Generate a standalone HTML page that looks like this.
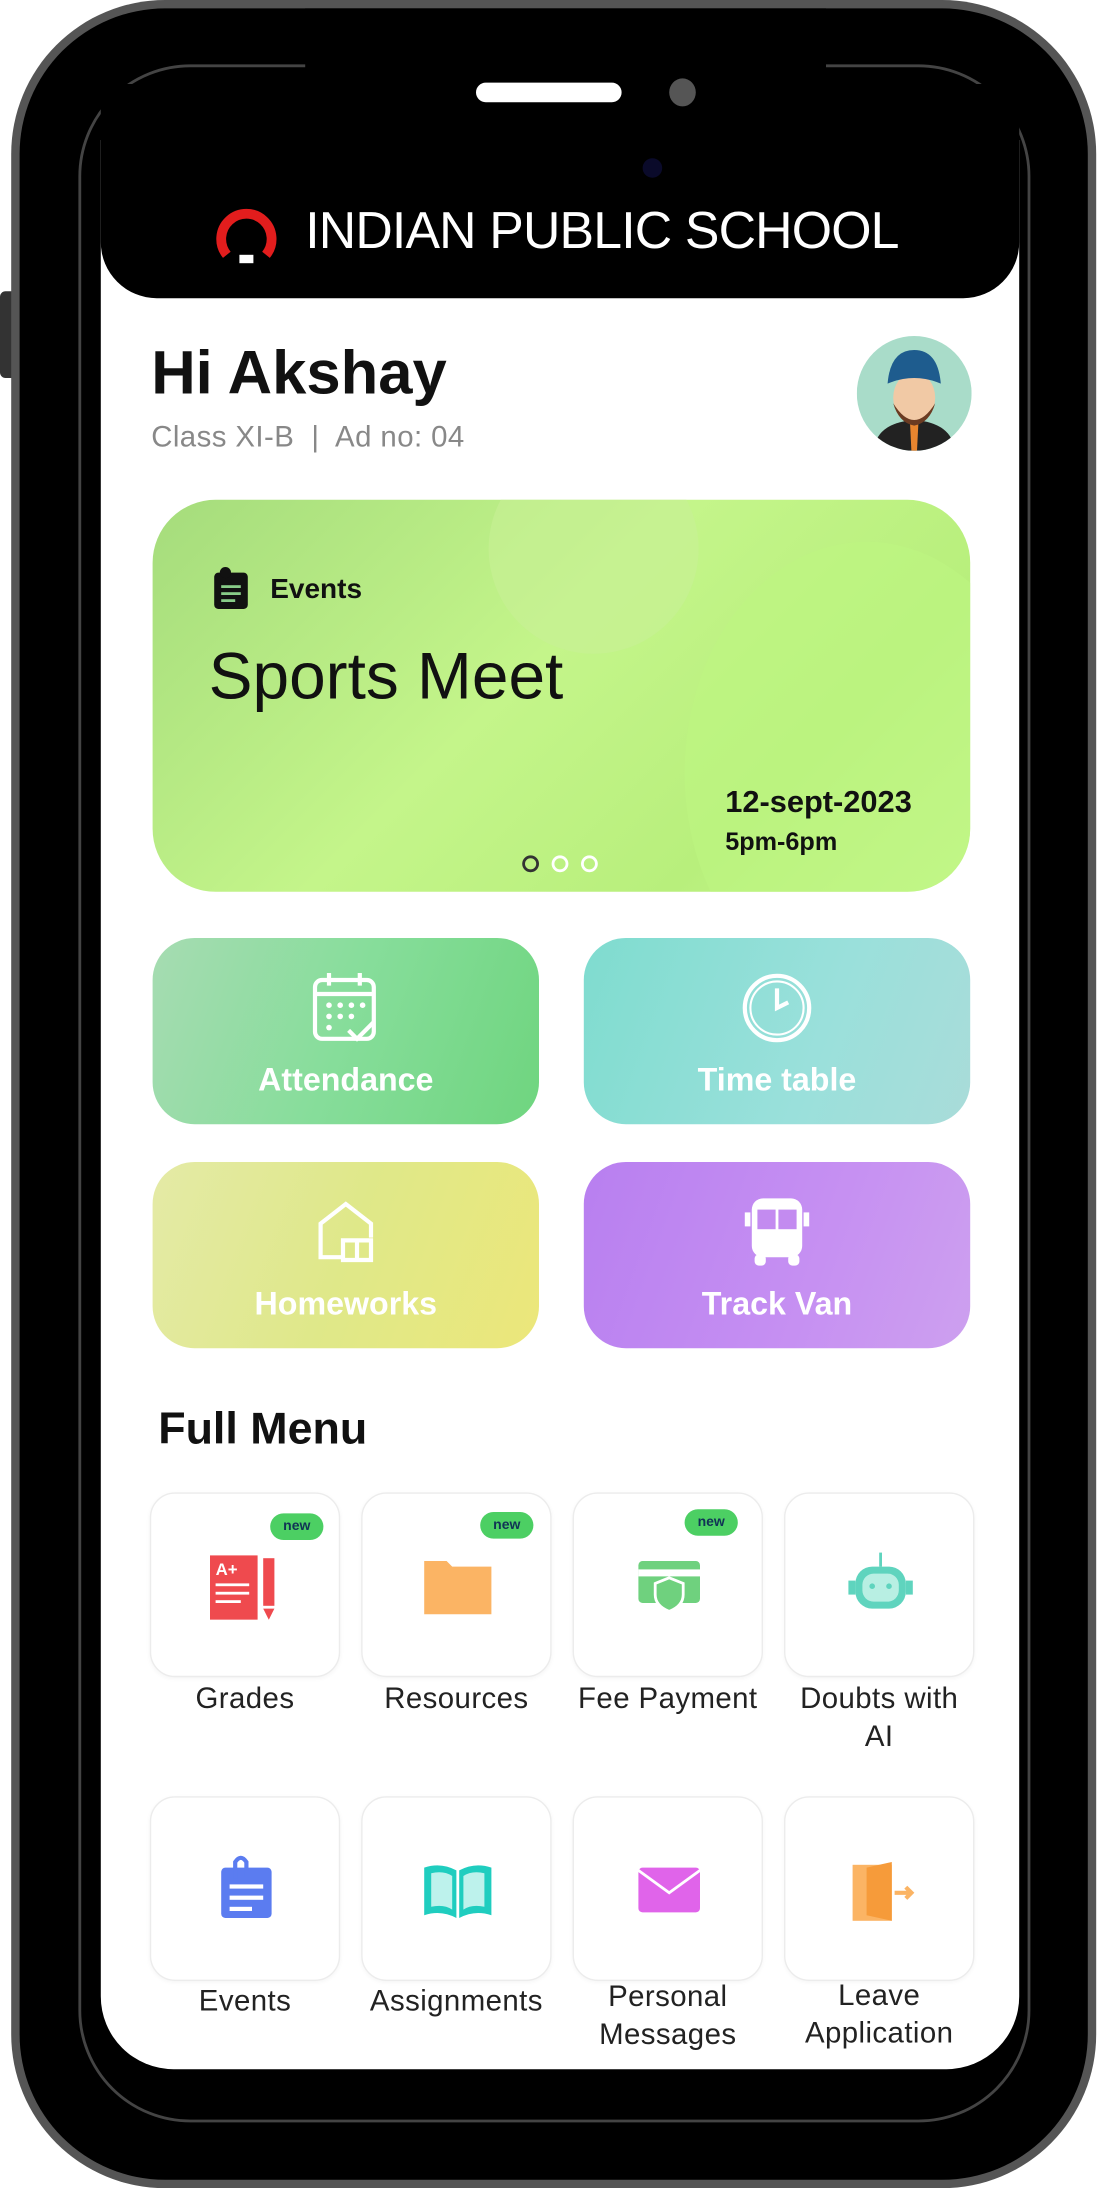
<!DOCTYPE html>
<html><head><meta charset="utf-8"><style>
html,body{margin:0;padding:0;background:#fff;width:1106px;height:2188px;overflow:hidden}
#w{position:absolute;left:0;top:0;width:790px;height:1563px;transform:scale(1.4);transform-origin:0 0;font-family:"Liberation Sans",sans-serif}
.a{position:absolute}
.tile{position:absolute;width:276px;height:133px;border-radius:30px;color:#fff;font-weight:bold;font-size:23px;text-align:center}
.tile span{position:absolute;left:0;right:0;top:88px}
.tile svg{position:absolute;left:112px;top:22px}
.card{position:absolute;width:134px;height:130px;border:1px solid #ececec;border-radius:18px;background:#fff;box-shadow:0 1px 3px rgba(0,0,0,.04)}
.lb{position:absolute;width:170px;text-align:center;font-size:21px;color:#222;line-height:27px;letter-spacing:0.3px}
.new{position:absolute;width:38px;height:19px;border-radius:10px;background:#4ccf63;color:#135;font-size:10px;text-align:center;line-height:19px;font-weight:bold}
.card svg{position:absolute;left:42px;top:40px}
</style></head><body><div id="w">
<div class="a" style="left:0;top:208px;width:12px;height:62px;background:#333;border-radius:4px"></div>
<div class="a" style="left:8px;top:0;width:775px;height:1563px;background:#555;border-radius:110px"></div>
<div class="a" style="left:14px;top:6px;width:763px;height:1551px;background:#000;border-radius:104px"></div>
<div class="a" style="left:56px;top:46px;width:680px;height:1470px;border-radius:80px;border:2px solid #444;box-sizing:border-box"></div>
<div class="a" style="left:72px;top:100px;width:656px;height:1378px;background:#fff;border-radius:0 0 52px 52px"></div>
<div class="a" style="left:72px;top:60px;width:656px;height:153px;background:#000;border-radius:0 0 40px 40px"></div>
<div class="a" style="left:218px;top:6px;width:372px;height:94px;background:#000;border-radius:0 0 30px 30px"></div>
<div class="a" style="left:340px;top:59px;width:104px;height:14px;background:#fff;border-radius:7px"></div>
<div class="a" style="left:478px;top:56px;width:19px;height:20px;background:#555;border-radius:50%"></div>
<div class="a" style="left:459px;top:113px;width:14px;height:14px;background:#0a0a2a;border-radius:50%"></div>
<svg class="a" style="left:152px;top:144px" width="48" height="46" viewBox="0 0 48 46"><path d="M10 38 A18 18 0 1 1 38 38" fill="none" stroke="#e21d1d" stroke-width="7"/><rect x="19" y="38" width="10" height="6" fill="#fff"/></svg>
<div class="a" style="left:218px;top:144px;font-size:37px;color:#fff;letter-spacing:-0.6px;white-space:nowrap">INDIAN PUBLIC SCHOOL</div>
<div class="a" style="left:108px;top:242px;font-size:44px;font-weight:bold;color:#111">Hi Akshay</div>
<div class="a" style="left:108px;top:301px;font-size:21px;color:#888;letter-spacing:0.3px">Class XI-B &nbsp;|&nbsp; Ad no: 04</div>
<svg class="a" style="left:612px;top:240px" width="82" height="82" viewBox="0 0 82 82"><defs><clipPath id="c"><circle cx="41" cy="41" r="41"/></clipPath></defs><g clip-path="url(#c)"><rect width="82" height="82" fill="#a9dcc9"/><path d="M12 82 Q14 62 41 60 Q68 62 70 82Z" fill="#222"/><path d="M38 62 L44 62 L43 82 L39 82Z" fill="#e8852f"/><ellipse cx="41" cy="44" rx="15" ry="18" fill="#f1c9a5"/><path d="M26 48 Q41 72 56 48 Q52 62 41 64 Q30 62 26 48Z" fill="#6b3b22"/><path d="M22 34 Q24 10 41 10 Q58 10 60 34 Q41 26 22 34Z" fill="#1e5c8e"/></g></svg>
<div class="a" style="left:109px;top:357px;width:584px;height:280px;border-radius:45px;background:linear-gradient(135deg,#a5dc7c 0%,#c4f58a 45%,#b8ef7c 75%,#c7f68f 100%);overflow:hidden">
<div class="a" style="left:240px;top:-40px;width:150px;height:150px;border-radius:50%;background:rgba(200,240,150,.6)"></div>
<div class="a" style="left:380px;top:30px;width:260px;height:330px;border-radius:50%;background:rgba(190,245,130,.55)"></div>
</div>
<svg class="a" style="left:151px;top:404px" width="28" height="32" viewBox="0 0 28 32"><rect x="2" y="5" width="24" height="26" rx="3" fill="#111"/><circle cx="10" cy="5" r="4" fill="#111"/><rect x="7" y="14" width="14" height="2" fill="#8c8"/><rect x="7" y="19" width="14" height="2" fill="#8c8"/><rect x="7" y="24" width="10" height="2" fill="#8c8"/></svg>
<div class="a" style="left:193px;top:410px;font-size:20px;font-weight:bold;color:#111">Events</div>
<div class="a" style="left:149px;top:455px;font-size:47px;color:#111">Sports Meet</div>
<div class="a" style="left:518px;top:560px;font-size:22px;font-weight:bold;color:#111">12-sept-2023</div>
<div class="a" style="left:518px;top:591px;font-size:18px;font-weight:bold;color:#111">5pm-6pm</div>
<div class="a" style="left:373px;top:611px;width:8px;height:8px;border:2px solid #333;border-radius:50%"></div>
<div class="a" style="left:394px;top:611px;width:8px;height:8px;border:2px solid #fff;border-radius:50%"></div>
<div class="a" style="left:415px;top:611px;width:8px;height:8px;border:2px solid #fff;border-radius:50%"></div>
<div class="tile" style="left:109px;top:670px;background:linear-gradient(110deg,#a6dcb2,#86dd9a 50%,#6fd57f)"><svg width="52" height="56" viewBox="0 0 52 56" fill="none" stroke="#fff" stroke-width="3"><rect x="4" y="8" width="42" height="42" rx="5"/><path d="M4 18H46M14 3V12M36 3V12M28 44L34 50L46 38"/><g fill="#fff" stroke="none"><circle cx="14" cy="26" r="2"/><circle cx="22" cy="26" r="2"/><circle cx="30" cy="26" r="2"/><circle cx="38" cy="26" r="2"/><circle cx="14" cy="34" r="2"/><circle cx="22" cy="34" r="2"/><circle cx="30" cy="34" r="2"/><circle cx="14" cy="42" r="2"/></g></svg><span>Attendance</span></div>
<div class="tile" style="left:417px;top:670px;background:linear-gradient(110deg,#7fdccf,#9ae0db 60%,#a9dcd9)"><svg width="52" height="56" viewBox="0 0 52 56" fill="none" stroke="#fff" stroke-width="3"><circle cx="26" cy="28" r="23"/><circle cx="26" cy="28" r="19" stroke-width="1.5"/><path d="M26 14V28L34 24"/></svg><span>Time table</span></div>
<div class="tile" style="left:109px;top:830px;background:linear-gradient(110deg,#e4eaa6,#dfe889 50%,#ece77a)"><svg width="52" height="56" viewBox="0 0 52 56" fill="none" stroke="#fff" stroke-width="3"><path d="M24 46H8V22L26 8L44 22V32"/><path d="M24 34H34V48H24ZM34 34H44V48H34Z"/></svg><span>Homeworks</span></div>
<div class="tile" style="left:417px;top:830px;background:linear-gradient(110deg,#b87ff0,#c690f2 60%,#cda0ef)"><svg width="52" height="56" viewBox="0 0 52 56" fill="#fff"><rect x="8" y="4" width="36" height="42" rx="8"/><rect x="12" y="12" width="13" height="14" fill="#c38bf0"/><rect x="27" y="12" width="13" height="14" fill="#c38bf0"/><rect x="10" y="44" width="8" height="8" rx="3"/><rect x="34" y="44" width="8" height="8" rx="3"/><rect x="3" y="14" width="4" height="10"/><rect x="45" y="14" width="4" height="10"/></svg><span>Track Van</span></div>
<div class="a" style="left:113px;top:1002px;font-size:32px;font-weight:bold;color:#111">Full Menu</div>
<div class="card" style="left:107px;top:1066px"><svg width="52" height="50" viewBox="0 0 52 50"><rect x="0" y="4" width="34" height="46" fill="#ef4a4e"/><text x="4" y="18" font-size="12" fill="#fff" font-family="Liberation Sans" font-weight="bold">A+</text><rect x="4" y="24" width="24" height="2" fill="#fff"/><rect x="4" y="30" width="24" height="2" fill="#fff"/><rect x="4" y="36" width="18" height="2" fill="#fff"/><rect x="38" y="6" width="8" height="34" fill="#ef4a4e"/><path d="M38 42H46L42 50Z" fill="#ef4a4e"/></svg></div>
<div class="new" style="left:193px;top:1081px">new</div>
<div class="card" style="left:258px;top:1066px"><svg width="52" height="50" viewBox="0 0 52 50"><path d="M2 8H18L22 12H50V46H2Z" fill="#fbb464"/></svg></div>
<div class="new" style="left:343px;top:1080px">new</div>
<div class="card" style="left:409px;top:1066px"><svg width="52" height="50" viewBox="0 0 52 50"><rect x="4" y="8" width="44" height="30" rx="3" fill="#6fd17e"/><rect x="4" y="14" width="44" height="5" fill="#fff"/><path d="M26 20L36 24V32Q36 40 26 44Q16 40 16 32V24Z" fill="#6fd17e" stroke="#fff" stroke-width="2"/></svg></div>
<div class="new" style="left:489px;top:1078px">new</div>
<div class="card" style="left:560px;top:1066px"><svg width="52" height="50" viewBox="0 0 52 50"><rect x="8" y="12" width="36" height="30" rx="12" fill="#5fd4be"/><rect x="13" y="17" width="26" height="20" rx="8" fill="#b8efe3"/><circle cx="20" cy="26" r="2" fill="#5fd4be"/><circle cx="32" cy="26" r="2" fill="#5fd4be"/><rect x="25" y="2" width="2" height="10" fill="#5fd4be"/><rect x="3" y="22" width="5" height="10" fill="#5fd4be"/><rect x="44" y="22" width="5" height="10" fill="#5fd4be"/></svg></div>
<div class="lb" style="left:90px;top:1200px">Grades</div>
<div class="lb" style="left:241px;top:1200px">Resources</div>
<div class="lb" style="left:392px;top:1200px">Fee Payment</div>
<div class="lb" style="left:543px;top:1200px">Doubts with<br>AI</div>
<div class="card" style="left:107px;top:1283px"><svg width="52" height="50" viewBox="0 0 52 50"><rect x="8" y="10" width="36" height="36" rx="3" fill="#5b7cf0"/><rect x="14" y="22" width="24" height="3" fill="#fff"/><rect x="14" y="30" width="24" height="3" fill="#fff"/><rect x="14" y="38" width="16" height="3" fill="#fff"/><path d="M18 18V6Q22 0 26 6V16" fill="none" stroke="#5b7cf0" stroke-width="3"/></svg></div>
<div class="card" style="left:258px;top:1283px"><svg width="52" height="50" viewBox="0 0 52 50"><path d="M2 10Q14 6 25 12V46Q14 40 2 44Z" fill="#1fcdbf"/><path d="M50 10Q38 6 27 12V46Q38 40 50 44Z" fill="#1fcdbf"/><path d="M7 14Q16 12 22 16V40Q16 36 7 38Z M45 14Q36 12 30 16V40Q36 36 45 38Z" fill="#bdf2ec"/></svg></div>
<div class="card" style="left:409px;top:1283px"><svg width="52" height="50" viewBox="0 0 52 50"><rect x="4" y="10" width="44" height="32" rx="3" fill="#e064ea"/><path d="M4 12L26 28L48 12" fill="none" stroke="#fff" stroke-width="2"/></svg></div>
<div class="card" style="left:560px;top:1283px"><svg width="52" height="50" viewBox="0 0 52 50"><rect x="6" y="8" width="28" height="40" fill="#fbb464"/><path d="M16 10L34 6V48L16 44Z" fill="#f69b3a"/><path d="M36 28H48M44 24L48 28L44 32" fill="none" stroke="#fbb464" stroke-width="3"/></svg></div>
<div class="lb" style="left:90px;top:1416px">Events</div>
<div class="lb" style="left:241px;top:1416px">Assignments</div>
<div class="lb" style="left:392px;top:1413px">Personal<br>Messages</div>
<div class="lb" style="left:543px;top:1412px">Leave<br>Application</div>
</div></body></html>
